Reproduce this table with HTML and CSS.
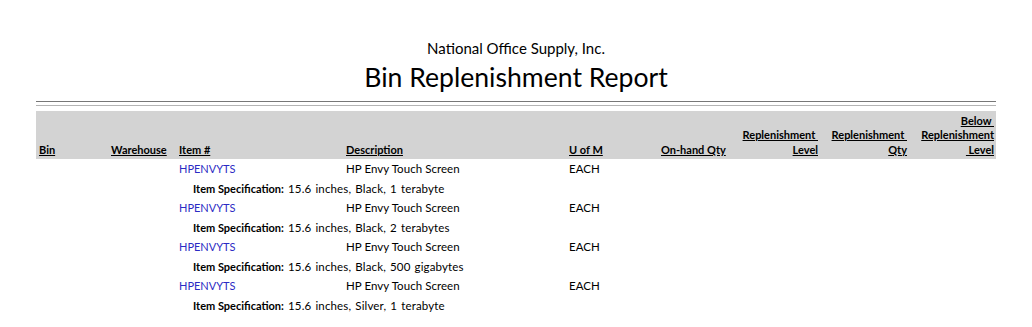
FILE: index.html
```html
<!DOCTYPE html>
<html>
<head>
<meta charset="utf-8">
<link rel="stylesheet" href="styles.css">
</head>
<body>
<div class="report">
  <div class="company">National Office Supply, Inc.</div>
  <div class="title">Bin Replenishment Report</div>
  <div class="rule rule-dark"></div>
  <div class="rule rule-light"></div>
  <table class="grid">
    <colgroup>
      <col class="c-bin"><col class="c-wh"><col class="c-item"><col class="c-desc"><col class="c-uom"><col class="c-onhand"><col class="c-rlev"><col class="c-rqty"><col class="c-below">
    </colgroup>
    <thead>
      <tr>
        <th><u>Bin</u></th>
        <th><u>Warehouse</u></th>
        <th><u>Item #</u></th>
        <th><u>Description</u></th>
        <th><u>U of M</u></th>
        <th><u>On-hand Qty</u></th>
        <th class="r"><u>Replenishment&nbsp;<br>Level</u></th>
        <th class="r"><u>Replenishment&nbsp;<br>Qty</u></th>
        <th class="r"><u>Below&nbsp;<br>Replenishment<br>&nbsp;Level</u></th>
      </tr>
    </thead>
    <tbody>
      <tr class="item"><td></td><td></td><td class="code">HPENVYTS</td><td>HP Envy Touch Screen</td><td>EACH</td><td></td><td></td><td></td><td></td></tr>
      <tr class="spec"><td></td><td></td><td colspan="7"><span class="spec-in"><b>Item Specification:</b> 15.6 inches, Black, 1 terabyte</span></td></tr>
      <tr class="item"><td></td><td></td><td class="code">HPENVYTS</td><td>HP Envy Touch Screen</td><td>EACH</td><td></td><td></td><td></td><td></td></tr>
      <tr class="spec"><td></td><td></td><td colspan="7"><span class="spec-in"><b>Item Specification:</b> 15.6 inches, Black, 2 terabytes</span></td></tr>
      <tr class="item"><td></td><td></td><td class="code">HPENVYTS</td><td>HP Envy Touch Screen</td><td>EACH</td><td></td><td></td><td></td><td></td></tr>
      <tr class="spec"><td></td><td></td><td colspan="7"><span class="spec-in"><b>Item Specification:</b> 15.6 inches, Black, 500 gigabytes</span></td></tr>
      <tr class="item"><td></td><td></td><td class="code">HPENVYTS</td><td>HP Envy Touch Screen</td><td>EACH</td><td></td><td></td><td></td><td></td></tr>
      <tr class="spec"><td></td><td></td><td colspan="7"><span class="spec-in"><b>Item Specification:</b> 15.6 inches, Silver, 1 terabyte</span></td></tr>
    </tbody>
  </table>
</div>
</body>
</html>
```

FILE: styles.css
```css
html, body {
  margin: 0;
  padding: 0;
  background: #ffffff;
}
body {
  font-family: Lato, "Open Sans", sans-serif;
  color: #000;
}
.report {
  width: 960px;
  margin-left: 36px;
  padding-top: 38px;
}
.company {
  text-align: center;
  font-size: 15px;
  line-height: 20px;
}
.title {
  text-align: center;
  font-size: 26.6px;
  line-height: 34px;
  margin-top: 2px;
}
.rule {
  height: 1px;
}
.rule-dark {
  margin-top: 7px;
  background: #777;
}
.rule-light {
  margin-top: 3px;
  background: #b4b4b4;
}
.grid {
  margin-top: 5px;
  width: 960px;
  border-collapse: collapse;
  table-layout: fixed;
  font-size: 11.5px;
  letter-spacing: 0.05px;
}
.c-bin { width: 72px; }
.c-wh { width: 68px; }
.c-item { width: 167px; }
.c-desc { width: 223px; }
.c-uom { width: 92px; }
.c-onhand { width: 72px; }
.c-rlev { width: 91px; }
.c-rqty { width: 89px; }
.c-below { width: 86px; }
thead tr {
  background: #d3d3d3;
  height: 48px;
}
th {
  text-align: left;
  vertical-align: bottom;
  font-weight: bold;
  font-size: 11px;
  letter-spacing: 0;
  line-height: 14.5px;
  padding: 0 3px 2px 3px;
  white-space: nowrap;
}
th.r {
  text-align: right;
}
th:last-child {
  padding-right: 2px;
}
td {
  padding: 0 3px;
  height: 19.5px;
  line-height: 19px;
  vertical-align: middle;
  white-space: nowrap;
}
.code {
  color: #2b2bc4;
  font-size: 11px;
  letter-spacing: 0;
}
.spec-in {
  padding-left: 14px;
  letter-spacing: 0.15px;
  word-spacing: 1px;
}
.spec-in b {
  font-size: 11px;
  letter-spacing: 0;
  word-spacing: 0;
}
```
